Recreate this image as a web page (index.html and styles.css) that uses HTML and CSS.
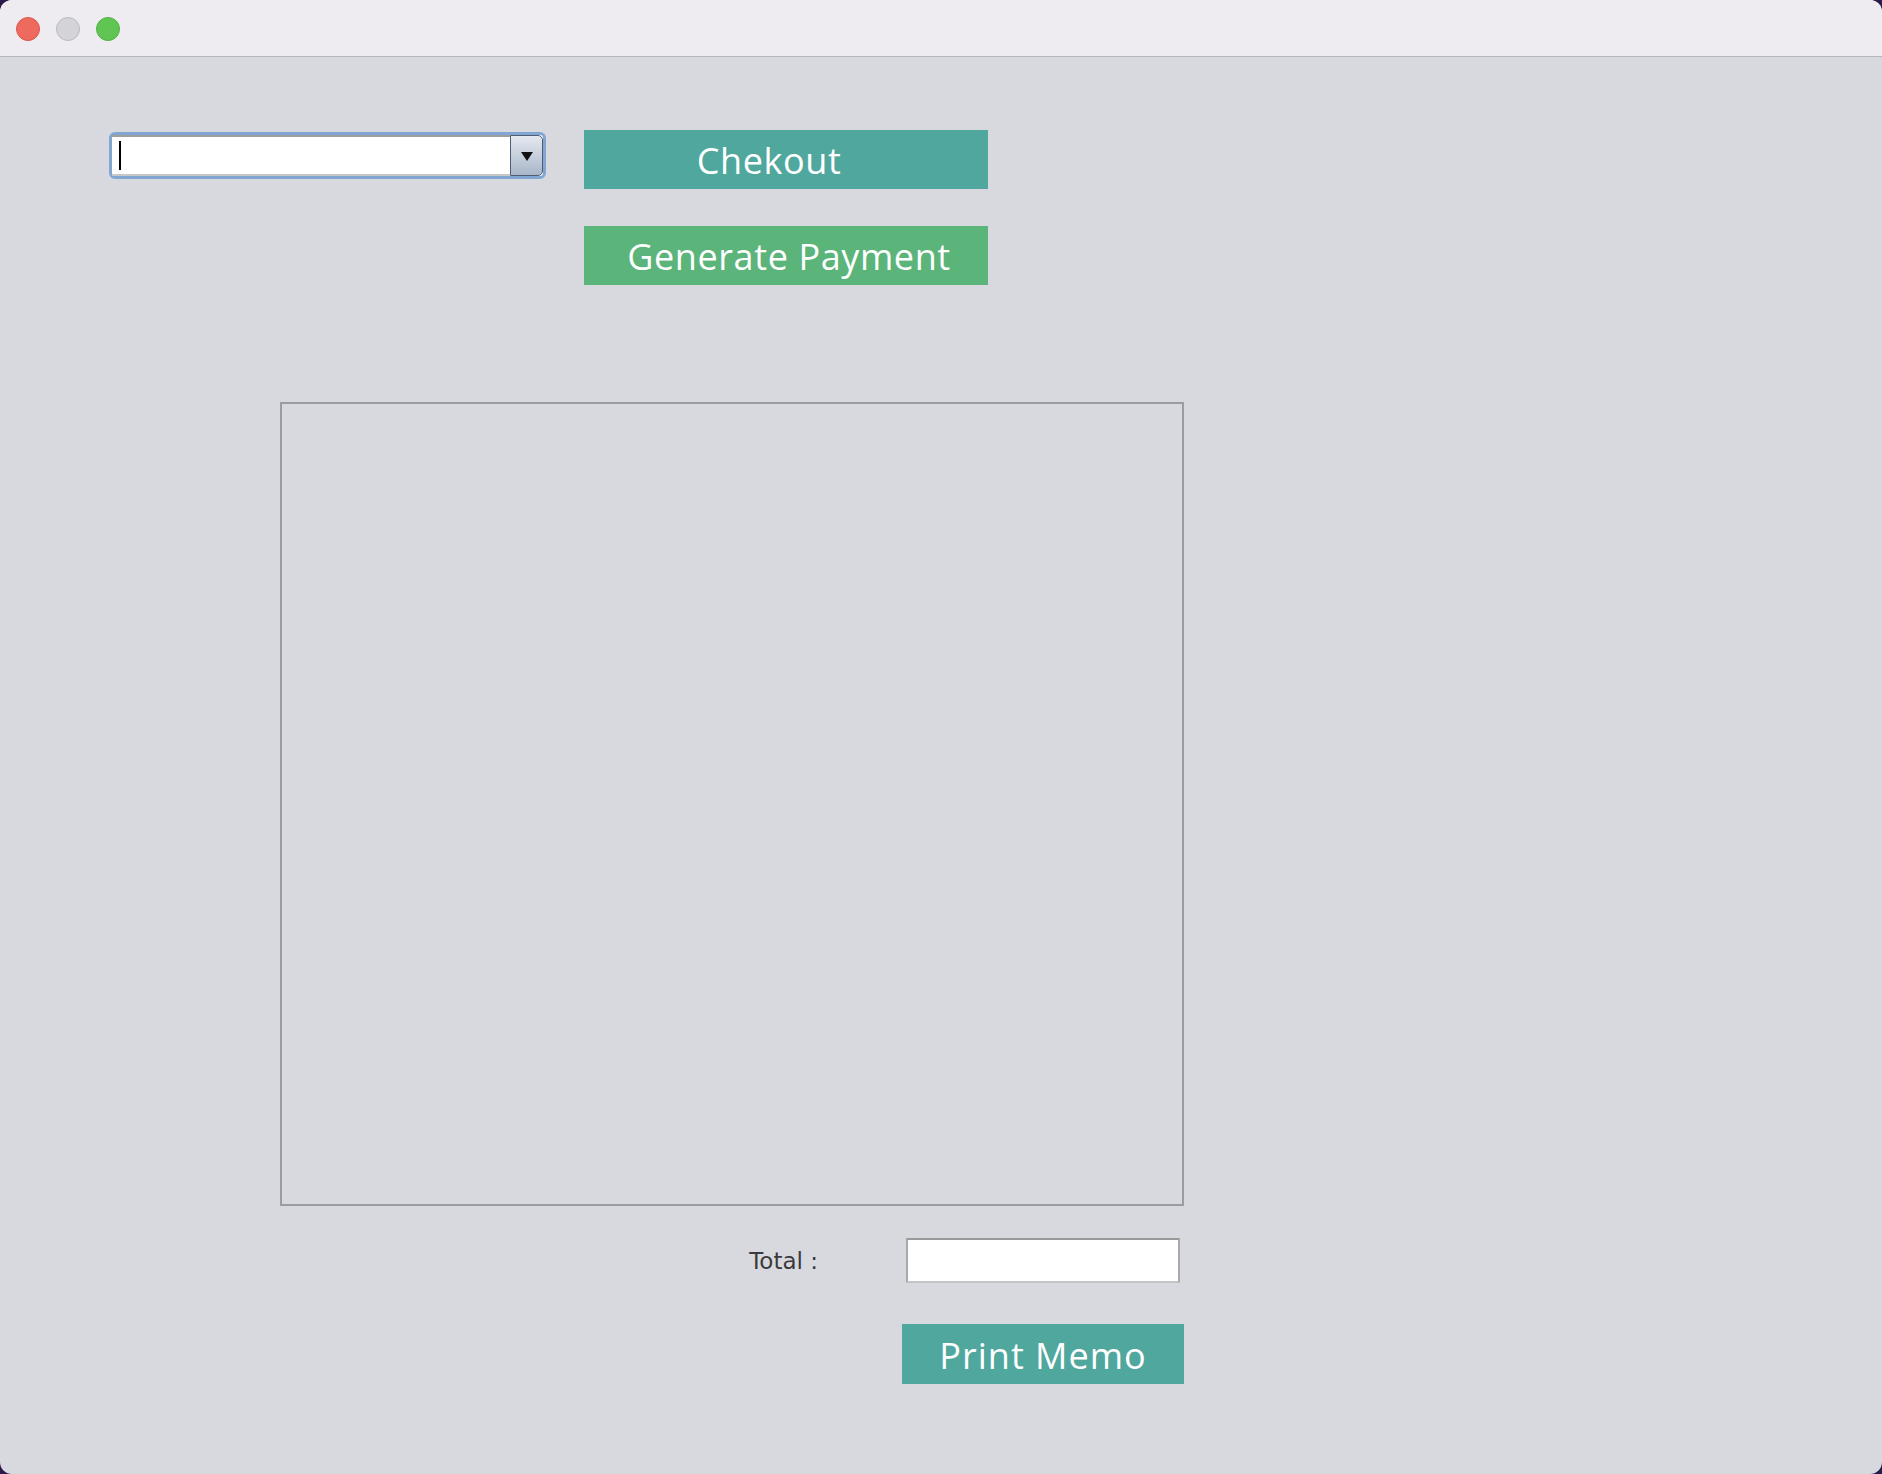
FILE: index.html
```html
<!DOCTYPE html>
<html>
<head>
<meta charset="utf-8">
<link rel="stylesheet" href="styles.css">
</head>
<body>
<div class="window">
  <div class="titlebar">
    <span class="light red"></span>
    <span class="light gray"></span>
    <span class="light green"></span>
  </div>
  <div class="content">
    <div class="top-row">
      <div class="combo">
        <div class="combo-field"><span class="caret"></span></div>
        <div class="combo-arrow"><span class="tri"></span></div>
      </div>
      <div class="btn-col">
        <div class="btn teal checkout">Chekout</div>
        <div class="btn green-btn">Generate Payment</div>
      </div>
    </div>
    <div class="lower">
      <div class="memo-box"></div>
      <div class="total-row">
        <span class="total-label">Total :</span>
        <div class="total-field"></div>
      </div>
      <div class="print-row">
        <div class="btn teal print">Print Memo</div>
      </div>
    </div>
  </div>
</div>
</body>
</html>
```

FILE: styles.css
```css
html, body {
  margin: 0;
  padding: 0;
}
body {
  width: 1882px;
  height: 1474px;
  background: #2b1a4a;
  overflow: hidden;
  font-family: "Open Sans", "Liberation Sans", sans-serif;
}
.window {
  width: 1882px;
  height: 1474px;
  background: #d8d9de;
  border-radius: 12px;
  overflow: hidden;
  display: flex;
  flex-direction: column;
}
.titlebar {
  height: 56px;
  flex: none;
  background: #eeecf1;
  border-bottom: 1px solid #b6b6bb;
  display: flex;
  align-items: center;
  padding-left: 16px;
  gap: 16px;
}
.light {
  width: 24px;
  height: 24px;
  border-radius: 50%;
  box-sizing: border-box;
  margin-top: 1px;
}
.light.red { background: #ee6a5f; border: 1px solid #d9574c; }
.light.gray { background: #d4d3d8; border: 1px solid #bab9be; }
.light.green { background: #61c554; border: 1px solid #52b044; }
.content {
  flex: 1;
  padding: 73px 0 0 109px;
}
.top-row {
  display: flex;
  align-items: flex-start;
}
.combo {
  margin-top: 2px;
  width: 437px;
  height: 47px;
  box-sizing: border-box;
  border: 3px solid #82a6d2;
  border-radius: 6px;
  background: #ffffff;
  display: flex;
}
.combo-field {
  flex: 1;
  border-top: 2px solid #9e9e9e;
  border-bottom: 2px solid #c8c8c8;
  display: flex;
  align-items: center;
  padding-left: 7px;
}
.caret {
  width: 2px;
  height: 29px;
  background: #000;
}
.combo-arrow {
  width: 33px;
  box-sizing: border-box;
  border: 1px solid #4e5d73;
  border-radius: 0 5px 5px 0;
  background: linear-gradient(#e4e9f0, #a9b6c8);
  display: flex;
  align-items: center;
  justify-content: center;
}
.tri {
  width: 0;
  height: 0;
  border-left: 6px solid transparent;
  border-right: 6px solid transparent;
  border-top: 9px solid #111;
  margin-top: 1px;
}
.btn-col {
  margin-left: 38px;
  display: flex;
  flex-direction: column;
  gap: 37px;
}
.btn {
  width: 404px;
  height: 59px;
  display: flex;
  align-items: center;
  justify-content: center;
  color: #ffffff;
  font-size: 36px;
  letter-spacing: 0.6px;
  box-sizing: border-box;
  padding-top: 2px;
}
.teal { background: #4fa79e; }
.green-btn { background: #5bb47a; padding-left: 6px; }
.checkout { padding-right: 34px; }
.lower {
  margin-top: 117px;
  margin-left: 171px;
  width: 904px;
  display: flex;
  flex-direction: column;
}
.memo-box {
  width: 904px;
  height: 804px;
  box-sizing: border-box;
  border: 2px solid #999ca3;
}
.total-row {
  margin-top: 32px;
  display: flex;
  align-items: center;
  justify-content: flex-end;
  padding-right: 4px;
}
.total-label {
  font-family: "DejaVu Sans", "Liberation Sans", sans-serif;
  font-size: 23px;
  color: #3a3a3c;
  margin-right: 88px;
}
.total-field {
  width: 274px;
  height: 45px;
  box-sizing: border-box;
  background: #ffffff;
  border: 2px solid #a9a9a9;
  border-top-color: #999999;
  border-bottom-color: #c4c4c4;
}
.print-row {
  margin-top: 41px;
  display: flex;
  justify-content: flex-end;
}
.btn.print {
  width: 282px;
  height: 60px;
  letter-spacing: 1px;
}
```
